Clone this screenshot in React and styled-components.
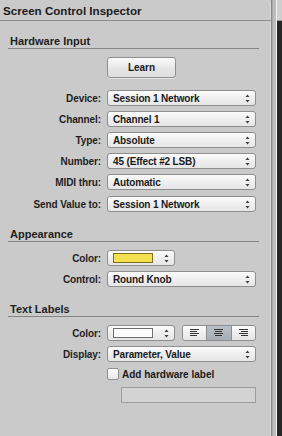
import React from "react";
import styled, { createGlobalStyle } from "styled-components";

const Global = createGlobalStyle`
  html, body { margin: 0; padding: 0; background: #c9c9c9; }
  body { font-family: "Liberation Sans", Arial, sans-serif; color: #1c1c1c; }
`;

const Page = styled.div`
  display: flex;
  width: 282px;
  height: 436px;
  overflow: hidden;
  background: #c9c9c9;
`;

const Panel = styled.div`
  width: 271px;
  flex: none;
  display: flex;
  flex-direction: column;
  background: #cacaca;
  border-top-right-radius: 6px;
  box-shadow: inset -1px 0 0 #d8d8d8;
`;

const TitleBar = styled.div`
  height: 20px;
  border-bottom: 1px solid #8d8d8d;
  display: flex;
  align-items: center;
  padding-left: 3px;
  font-size: 11.6px;
  font-weight: bold;
  color: #1a1a1a;
`;

const Gutter = styled.div`
  flex: 1;
  display: flex;
  background: #c9c9c9;
`;

const Groove = styled.div`
  width: 6px;
  flex: none;
  background: linear-gradient(to right, #8a8a8a 0 1px, #a9a9a9 1px 2px, #bcbcbc 2px 5px, #f2f2f2 5px 6px);
`;

const DarkPane = styled.div`
  flex: 1;
  display: flex;
  flex-direction: column;
  background: #262626;
`;

const DarkCap = styled.div`
  height: 20px;
  background: #cfcfcf;
  border-bottom: 1px solid #9a9a9a;
`;

const SectionHeader = styled.div`
  margin: 0 12px 0 8px;
  padding: ${(p) => p.$top}px 0 0 2px;
  height: 14px;
  line-height: 14px;
  font-size: 11px;
  font-weight: bold;
  color: #1e1e1e;
  border-bottom: 1px solid #858585;
`;

const Row = styled.div`
  display: grid;
  grid-template-columns: 101px 149px;
  column-gap: 6px;
  align-items: center;
  min-height: 16px;
  margin-top: ${(p) => p.$gap}px;
`;

const Label = styled.div`
  text-align: right;
  font-size: 10px;
  font-weight: bold;
  color: #1e1e1e;
  letter-spacing: -0.1px;
`;

const Control = styled.div`
  grid-column: 2;
  display: flex;
  align-items: center;
  gap: 7px;
`;

const Button = styled.div`
  width: 67px;
  height: 19px;
  border: 1px solid #8f8f8f;
  border-radius: 3px;
  background: linear-gradient(#fbfbfb, #e6e6e6 55%, #dedede);
  box-shadow: 0 1px 0 rgba(255,255,255,0.5);
  display: flex;
  align-items: center;
  justify-content: center;
  font-size: 10px;
  font-weight: bold;
  color: #1a1a1a;
`;

const Select = styled.div`
  box-sizing: border-box;
  width: ${(p) => p.$w}px;
  height: 16px;
  border: 1px solid #8e8e8e;
  border-radius: 3px;
  background: linear-gradient(#fcfcfc, #efefef 50%, #e6e6e6);
  display: flex;
  align-items: center;
  padding: 0 5px 0 5px;
  font-size: 10px;
  font-weight: bold;
  color: #1a1a1a;
  letter-spacing: -0.15px;
`;

const SelectText = styled.span`
  flex: 1;
  white-space: nowrap;
`;

const Swatch = styled.span`
  width: 38px;
  height: 8px;
  border: 1px solid ${(p) => p.$border};
  background: ${(p) => p.$fill};
  margin-right: auto;
`;

const Segmented = styled.div`
  box-sizing: border-box;
  width: 74px;
  height: 16px;
  display: flex;
  border: 1px solid #8e8e8e;
  border-radius: 3px;
  overflow: hidden;
`;

const Segment = styled.div`
  flex: 1;
  display: flex;
  align-items: center;
  justify-content: center;
  background: ${(p) =>
    p.$on
      ? "linear-gradient(#b9bfc6, #a6adb5)"
      : "linear-gradient(#fcfcfc, #efefef 50%, #e6e6e6)"};
  & + & { border-left: 1px solid #8e8e8e; }
`;

const CheckBox = styled.span`
  box-sizing: border-box;
  width: 12px;
  height: 12px;
  border: 1px solid #8e8e8e;
  border-radius: 2px;
  background: linear-gradient(#fdfdfd, #e8e8e8);
`;

const CheckLabel = styled.span`
  font-size: 10px;
  font-weight: bold;
  color: #1a1a1a;
  margin-left: -4px;
`;

const TextField = styled.div`
  box-sizing: border-box;
  grid-column: 2;
  margin-left: 14px;
  width: 135px;
  height: 16px;
  border: 1px solid #9d9d9d;
  background: #d3d3d3;
`;

const Arrows = () => (
  <svg width="5" height="9" viewBox="0 0 5 9">
    <path d="M2.5 0.5 L4.5 3 L0.5 3 Z" fill="#3a3a3a" />
    <path d="M0.5 6 L4.5 6 L2.5 8.5 Z" fill="#3a3a3a" />
  </svg>
);

const AlignIcon = ({ mode }) => {
  const lines = [
    [9, 0],
    [6, 1],
    [9, 0],
    [6, 1],
  ];
  return (
    <svg width="11" height="8" viewBox="0 0 11 8">
      {lines.map(([len, short], i) => {
        let x = 1;
        const w = short ? 7 : 9;
        if (mode === "center") x = (11 - w) / 2;
        if (mode === "right") x = 10 - w;
        if (mode === "left") x = 1;
        return (
          <rect key={i} x={x} y={i * 2} width={w} height="1" fill="#333" />
        );
      })}
    </svg>
  );
};

const SelectRow = ({ label, value, gap, w = 149 }) => (
  <Row $gap={gap}>
    <Label>{label}</Label>
    <Control>
      <Select $w={w}>
        <SelectText>{value}</SelectText>
        <Arrows />
      </Select>
    </Control>
  </Row>
);

const ColorSelect = ({ fill, border }) => (
  <Select $w={68}>
    <Swatch $fill={fill} $border={border} />
    <Arrows />
  </Select>
);

export default function App() {
  return (
    <>
      <Global />
      <Page>
        <Panel>
          <TitleBar>Screen Control Inspector</TitleBar>

          <SectionHeader $top={13}>Hardware Input</SectionHeader>
          <Row $gap={8}>
            <Control>
              <Button>Learn</Button>
            </Control>
          </Row>
          <SelectRow gap={12} label="Device:" value="Session 1 Network" />
          <SelectRow gap={5} label="Channel:" value="Channel 1" />
          <SelectRow gap={5} label="Type:" value="Absolute" />
          <SelectRow gap={5} label="Number:" value="45 (Effect #2 LSB)" />
          <SelectRow gap={5} label="MIDI thru:" value="Automatic" />
          <SelectRow gap={6} label="Send Value to:" value="Session 1 Network" />

          <SectionHeader $top={15}>Appearance</SectionHeader>
          <Row $gap={8}>
            <Label>Color:</Label>
            <Control>
              <ColorSelect fill="#f3e04e" border="#7d7020" />
            </Control>
          </Row>
          <SelectRow gap={5} label="Control:" value="Round Knob" />

          <SectionHeader $top={15}>Text Labels</SectionHeader>
          <Row $gap={8}>
            <Label>Color:</Label>
            <Control>
              <ColorSelect fill="#ffffff" border="#6e6e6e" />
              <Segmented>
                <Segment><AlignIcon mode="left" /></Segment>
                <Segment $on><AlignIcon mode="center" /></Segment>
                <Segment><AlignIcon mode="right" /></Segment>
              </Segmented>
            </Control>
          </Row>
          <SelectRow gap={5} label="Display:" value="Parameter, Value" />
          <Row $gap={4}>
            <Control>
              <CheckBox />
              <CheckLabel>Add hardware label</CheckLabel>
            </Control>
          </Row>
          <Row $gap={5}>
            <TextField />
          </Row>
        </Panel>
        <Gutter>
          <Groove />
          <DarkPane>
            <DarkCap />
          </DarkPane>
        </Gutter>
      </Page>
    </>
  );
}
